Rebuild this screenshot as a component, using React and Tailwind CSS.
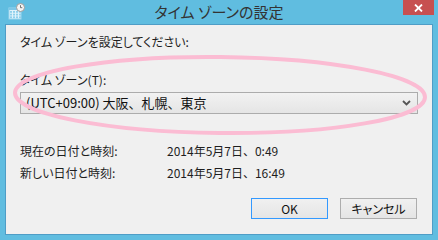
import React from "react";

const jp = "font-['Meiryo_UI','Noto_Sans_CJK_JP',sans-serif]";

function Icon() {
  return (
    <svg width="17" height="17" viewBox="0 0 17 17">
      <rect x="1" y="5" width="12" height="11" fill="#dff3fb" stroke="#9dd6ee" strokeWidth="1" />
      <rect x="1" y="5" width="12" height="2" fill="#7cc7e8" />
      {[0, 1, 2, 3].map((c) =>
        [0, 1, 2].map((r) => (
          <rect key={c + "-" + r} x={2 + c * 3} y={8 + r * 2.7} width="2" height="1.8" fill="#8fd0ec" />
        ))
      )}
      <circle cx="12.5" cy="4.5" r="4" fill="#f4f4f4" stroke="#9a9a9a" strokeWidth="1" />
      <path d="M12.5 2.2 V4.7 H14.3" stroke="#666" strokeWidth="0.9" fill="none" />
    </svg>
  );
}

export default function App() {
  return (
    <div className={`relative w-[438px] h-[240px] bg-[#60bde0] flex flex-col ${jp}`}>
      <div className="h-[24px] grid grid-cols-[1fr_auto_1fr] items-start">
        <div className="pl-[8px] pt-[3px]">
          <Icon />
        </div>
        <div className="pt-[3px] text-[15px] leading-[18px] text-[#333] [font-feature-settings:'palt']">
          タイム ゾーンの設定
        </div>
        <div className="flex justify-end pr-[4px]">
          <div className="w-[31px] h-[15px] bg-[#c75050] flex items-center justify-center">
            <svg width="9" height="8" viewBox="0 0 9 8">
              <path d="M1 0.5 L8 7.5 M8 0.5 L1 7.5" stroke="#fff" strokeWidth="1.8" />
            </svg>
          </div>
        </div>
      </div>
      <div className="mx-[5px] mb-[5px] flex-1 bg-[#f0f0f0] border border-[#4f9dc6] pl-[14px] pr-[14px] text-[12px] leading-[16px] text-[#1e1e1e] [font-feature-settings:'palt']">
        <div className="mt-[9px]">タイム ゾーンを設定してください:</div>
        <div className="mt-[22px]">タイム ゾーン(T):</div>
        <div className="mt-[4px] h-[22px] border border-[#acacac] bg-gradient-to-b from-[#f2f2f2] to-[#e5e5e5] flex items-center justify-between pl-[5px] pr-[6px]">
          <span className="text-[13px] leading-[18px] text-[#111] [font-feature-settings:normal]">(UTC+09:00) 大阪、札幌、東京</span>
          <svg width="9" height="6" viewBox="0 0 9 6">
            <path d="M1 1 L4.5 4.5 L8 1" stroke="#555" strokeWidth="1.8" fill="none" />
          </svg>
        </div>
        <div className="mt-[29px] flex">
          <div className="w-[147px]">現在の日付と時刻:</div>
          <div className="[font-feature-settings:normal]">2014年5月7日、0:49</div>
        </div>
        <div className="mt-[6px] flex">
          <div className="w-[147px]">新しい日付と時刻:</div>
          <div className="[font-feature-settings:normal]">2014年5月7日、16:49</div>
        </div>
        <div className="mt-[17px] flex justify-end gap-[12px] pr-[1px]">
          <button className="w-[77px] h-[21px] border border-[#3399ff] bg-gradient-to-b from-[#f0f0f0] to-[#e5e5e5] text-[12px] text-[#111]">
            OK
          </button>
          <button className="w-[77px] h-[21px] border border-[#adadad] bg-gradient-to-b from-[#f0f0f0] to-[#e5e5e5] text-[12px] text-[#111]">
            キャンセル
          </button>
        </div>
      </div>
      <svg className="absolute left-0 top-0 pointer-events-none" width="438" height="240">
        <ellipse cx="220" cy="95" rx="205" ry="38" fill="none" stroke="#fbbcd3" strokeWidth="4" transform="rotate(0.6 220 95)" />
      </svg>
    </div>
  );
}
